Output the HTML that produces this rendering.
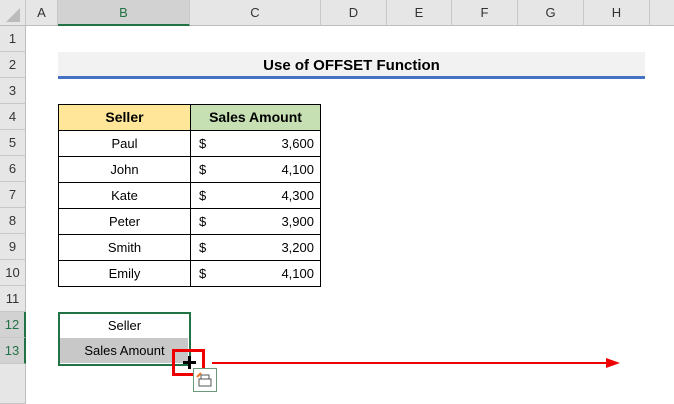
<!DOCTYPE html><html><head><style>
body{margin:0;width:674px;height:400px;background:#fff;font-family:"Liberation Sans",sans-serif;position:relative;overflow:hidden}
div{position:absolute;box-sizing:border-box}
.ch{top:0;height:26px;background:#e6e6e6;border-right:1px solid #c8c8c8;border-bottom:1px solid #bdbdbd;font-size:13px;color:#333;text-align:center;line-height:26px}
.rh{left:0;width:26px;height:26px;background:#e6e6e6;border-bottom:1px solid #c8c8c8;border-right:1px solid #bdbdbd;font-size:13px;color:#333;text-align:center;line-height:26px}
.c{height:27px;border:1px solid #000;font-size:13px;line-height:25px;text-align:center}
</style></head><body>
<div class="ch" style="left:0;width:26px"><svg width="26" height="26"><polygon points="20,8 20,22 6,22" fill="#bbb"/></svg></div>
<div class="ch" style="left:26px;width:32px">A</div>
<div class="ch" style="left:58px;width:132px;background:#d2d2d2;border-bottom:2px solid #217346;color:#217346">B</div>
<div class="ch" style="left:190px;width:131px">C</div>
<div class="ch" style="left:321px;width:66px">D</div>
<div class="ch" style="left:387px;width:65px">E</div>
<div class="ch" style="left:452px;width:66px">F</div>
<div class="ch" style="left:518px;width:66px">G</div>
<div class="ch" style="left:584px;width:66px">H</div>
<div class="ch" style="left:650px;width:30px"></div>
<div class="rh" style="top:26px">1</div><div class="rh" style="top:52px">2</div><div class="rh" style="top:78px">3</div><div class="rh" style="top:104px">4</div><div class="rh" style="top:130px">5</div><div class="rh" style="top:156px">6</div><div class="rh" style="top:182px">7</div><div class="rh" style="top:208px">8</div><div class="rh" style="top:234px">9</div><div class="rh" style="top:260px">10</div><div class="rh" style="top:286px">11</div>
<div class="rh" style="top:312px;background:#d2d2d2;color:#217346;border-right:2px solid #217346">12</div>
<div class="rh" style="top:338px;background:#d2d2d2;color:#217346;border-right:2px solid #217346">13</div>
<div class="rh" style="top:364px;height:40px"></div>
<div style="left:58px;top:52px;width:587px;height:27px;background:#f2f2f2;border-bottom:3px solid #4472c4;text-align:center;font-weight:bold;font-size:15px;line-height:27px">Use of OFFSET Function</div>
<div class="c" style="left:58px;top:104px;width:133px;background:#ffe699;font-weight:bold;font-size:14px">Seller</div>
<div class="c" style="left:190px;top:104px;width:131px;background:#c6e0b4;font-weight:bold;font-size:14px">Sales Amount</div>
<div style="left:0;top:130px">
<div class="c" style="left:58px;top:0;width:133px">Paul</div><div class="c" style="left:190px;top:0;width:131px"><span style="position:absolute;left:8px">$</span><span style="position:absolute;right:6px">3,600</span></div>
<div class="c" style="left:58px;top:26px;width:133px">John</div><div class="c" style="left:190px;top:26px;width:131px"><span style="position:absolute;left:8px">$</span><span style="position:absolute;right:6px">4,100</span></div>
<div class="c" style="left:58px;top:52px;width:133px">Kate</div><div class="c" style="left:190px;top:52px;width:131px"><span style="position:absolute;left:8px">$</span><span style="position:absolute;right:6px">4,300</span></div>
<div class="c" style="left:58px;top:78px;width:133px">Peter</div><div class="c" style="left:190px;top:78px;width:131px"><span style="position:absolute;left:8px">$</span><span style="position:absolute;right:6px">3,900</span></div>
<div class="c" style="left:58px;top:104px;width:133px">Smith</div><div class="c" style="left:190px;top:104px;width:131px"><span style="position:absolute;left:8px">$</span><span style="position:absolute;right:6px">3,200</span></div>
<div class="c" style="left:58px;top:130px;width:133px">Emily</div><div class="c" style="left:190px;top:130px;width:131px"><span style="position:absolute;left:8px">$</span><span style="position:absolute;right:6px">4,100</span></div>
</div>
<div style="left:60px;top:338px;width:128px;height:25px;background:#c8c8c8"></div>
<div style="left:58px;top:312px;width:133px;height:54px;border:2px solid #217346"></div>
<div style="left:58px;top:312px;width:133px;height:26px;font-size:13px;line-height:28px;text-align:center">Seller</div>
<div style="left:58px;top:338px;width:133px;height:26px;font-size:13px;line-height:26px;text-align:center">Sales Amount</div>
<div style="left:172px;top:349px;width:33px;height:27px;border:3px solid #e00"></div>
<div style="left:183px;top:361px;width:13px;height:3px;background:#000"></div>
<div style="left:188px;top:356px;width:3px;height:13px;background:#000"></div>
<div style="left:193px;top:368px;width:24px;height:24px;border:1px solid #6a9a7a;background:#fff"><svg width="22" height="22"><rect x="5" y="10" width="12" height="7" fill="none" stroke="#555"/><rect x="7" y="6" width="8" height="4" fill="none" stroke="#555"/><path d="M3 8 L7 4" stroke="#e87a2a" stroke-width="2"/></svg></div>
<svg style="position:absolute;left:0;top:0" width="674" height="400"><line x1="212" y1="363" x2="608" y2="363" stroke="#e00" stroke-width="2"/><polygon points="606,358 620,363 606,368" fill="#e00"/></svg>
</body></html>
